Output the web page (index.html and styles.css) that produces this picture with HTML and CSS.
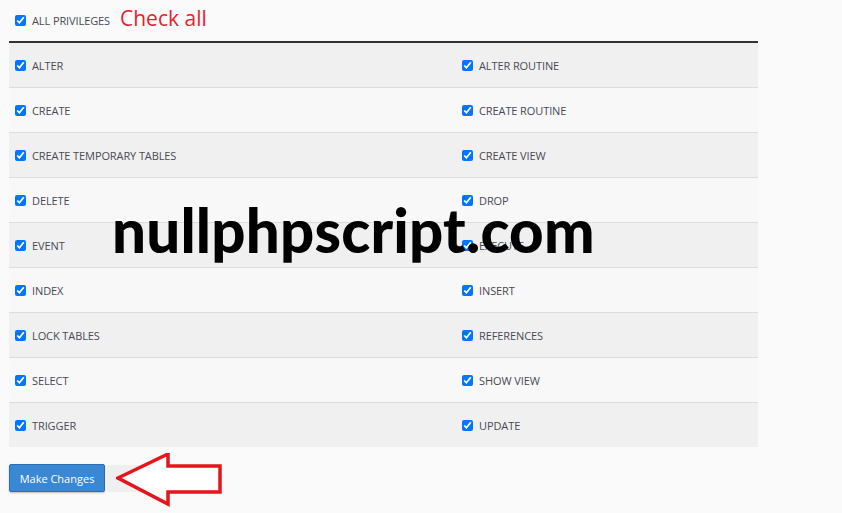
FILE: index.html
```html
<!DOCTYPE html>
<html>
<head>
<meta charset="utf-8">
<link rel="stylesheet" href="styles.css">
</head>
<body>
<div class="page">
  <div class="head">
    <label class="item"><input type="checkbox" checked><span>ALL PRIVILEGES</span></label>
    <span class="note">Check all</span>
  </div>
  <div class="grid">
    <div class="row odd"><label class="item"><input type="checkbox" checked><span>ALTER</span></label><label class="item"><input type="checkbox" checked><span>ALTER ROUTINE</span></label></div>
    <div class="row"><label class="item"><input type="checkbox" checked><span>CREATE</span></label><label class="item"><input type="checkbox" checked><span>CREATE ROUTINE</span></label></div>
    <div class="row odd"><label class="item"><input type="checkbox" checked><span>CREATE TEMPORARY TABLES</span></label><label class="item"><input type="checkbox" checked><span>CREATE VIEW</span></label></div>
    <div class="row"><label class="item"><input type="checkbox" checked><span>DELETE</span></label><label class="item"><input type="checkbox" checked><span>DROP</span></label></div>
    <div class="row odd"><label class="item"><input type="checkbox" checked><span>EVENT</span></label><label class="item"><input type="checkbox" checked><span>EXECUTE</span></label></div>
    <div class="row"><label class="item"><input type="checkbox" checked><span>INDEX</span></label><label class="item"><input type="checkbox" checked><span>INSERT</span></label></div>
    <div class="row odd"><label class="item"><input type="checkbox" checked><span>LOCK TABLES</span></label><label class="item"><input type="checkbox" checked><span>REFERENCES</span></label></div>
    <div class="row"><label class="item"><input type="checkbox" checked><span>SELECT</span></label><label class="item"><input type="checkbox" checked><span>SHOW VIEW</span></label></div>
    <div class="row odd last"><label class="item"><input type="checkbox" checked><span>TRIGGER</span></label><label class="item"><input type="checkbox" checked><span>UPDATE</span></label></div>
  </div>
  <div class="actions">
    <button class="btn">Make Changes</button>
    <span class="back"></span>
  </div>
</div>
<div class="watermark">nullphpscript.com</div>
<svg class="arrow" width="110" height="56" viewBox="0 0 110 56">
  <polygon points="2,25 52,1 52,13 104,13 104,39 52,39 52,51" fill="#ffffff" stroke="#e8141c" stroke-width="3.5" stroke-linejoin="miter"/>
</svg>
</body>
</html>
```

FILE: styles.css
```css
html, body {
  margin: 0;
  padding: 0;
  background: #fafafa;
}
body {
  font-family: "Open Sans", "Liberation Sans", sans-serif;
  color: #4a4a55;
  position: relative;
  width: 842px;
  height: 513px;
  overflow: hidden;
}
.page {
  padding-left: 9px;
  width: 749px;
}
.head {
  height: 41px;
  display: flex;
  align-items: center;
  padding-left: 6px;
  box-sizing: border-box;
}
.note {
  color: #e8202a;
  font-size: 21px;
  margin-left: 10px;
  line-height: 1;
  position: relative;
  top: -2px;
}
.item {
  display: flex;
  align-items: center;
  font-size: 11px;
  letter-spacing: -0.1px;
}
.item input {
  width: 11px;
  height: 11px;
  margin: 0 6px 0 0;
  accent-color: #0075ff;
}
.grid {
  border-top: 2px solid #333;
}
.row {
  display: grid;
  grid-template-columns: 447px 1fr;
  height: 45px;
  box-sizing: border-box;
  border-bottom: 1px solid #dcdcdc;
  background: #f8f8f8;
  align-items: center;
  padding-left: 6px;
}
.row.odd {
  background: #f0f0f0;
}
.row.last {
  border-bottom: none;
  height: 44px;
}
.actions {
  margin-top: 17px;
  display: flex;
  align-items: center;
}
.btn {
  height: 28px;
  width: 96px;
  background: #3a87d3;
  border: 1px solid #2b6eb1;
  border-radius: 2px;
  color: #fff;
  font-family: "Open Sans", "Liberation Sans", sans-serif;
  font-size: 11px;
  padding: 0;
  box-shadow: 0 1px 2px rgba(0,0,0,0.25);
}
.back {
  display: block;
  width: 52px;
  height: 27px;
  background: #efefef;
  margin-left: 2px;
}
.watermark {
  position: absolute;
  left: 112px;
  top: 200px;
  font-family: "Lato", "Open Sans", sans-serif;
  font-weight: 900;
  font-size: 60px;
  color: #000;
  line-height: 1;
  letter-spacing: 0.2px;
}
.arrow {
  position: absolute;
  left: 116px;
  top: 453px;
}
```
